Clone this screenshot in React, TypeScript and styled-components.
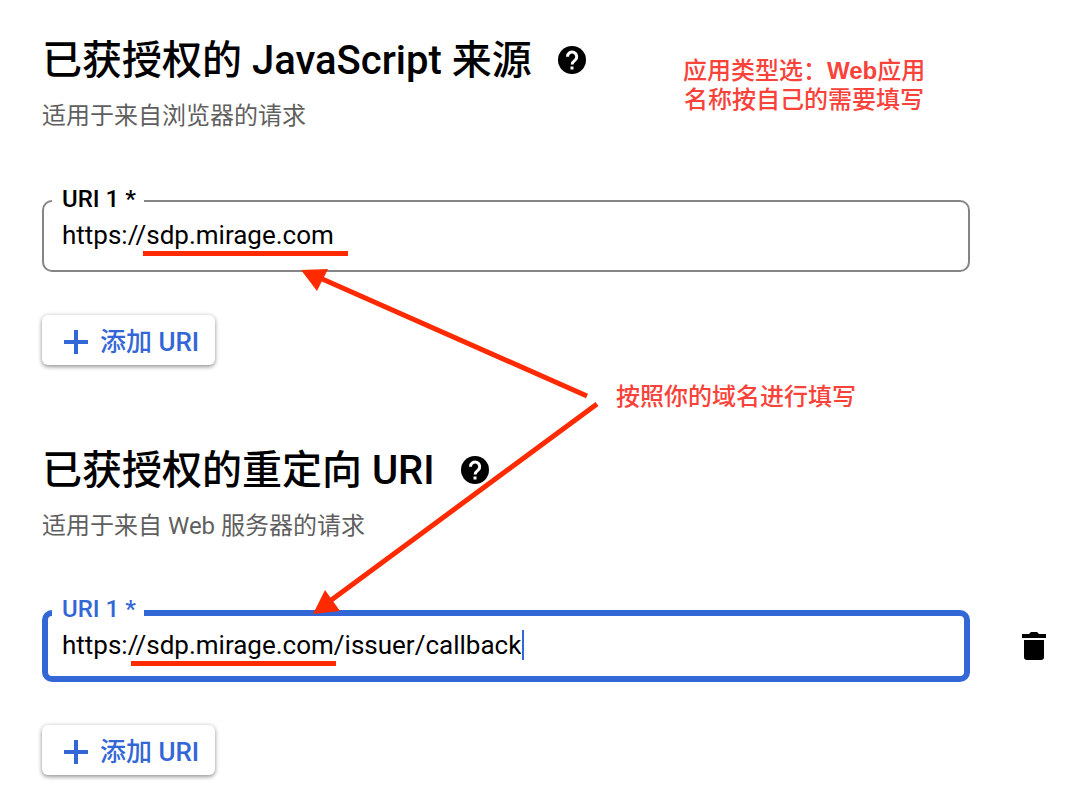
import React from "react";
import styled, { createGlobalStyle } from "styled-components";

const BLUE = "#3367d6";
const RED = "#ff2a00";

const GlobalStyle = createGlobalStyle`
  *, *::before, *::after { box-sizing: border-box; }
  body {
    margin: 0;
    background: #fff;
    color: #000;
    font-family: Roboto, "Noto Sans CJK SC", sans-serif;
  }
`;

const Page = styled.main`
  position: relative;
  display: flex;
  flex-direction: column;
  gap: 81px;
  padding: 36px 34px 16px 42px;
`;

const Section = styled.section`
  display: flex;
  flex-direction: column;
  align-items: stretch;
`;

const TitleRow = styled.div`
  display: flex;
  align-items: center;
  gap: 26px;
  height: 48px;
`;

const Title = styled.h2`
  margin: 0;
  padding-top: 2px;
  font-size: 40px;
  line-height: 48px;
  font-weight: 500;
`;

const Hint = styled.p`
  margin: 16px 0 68px;
  font-size: 24px;
  line-height: 32px;
  font-weight: 400;
  color: #5f5f5f;
`;

const IconButton = styled.button`
  display: flex;
  padding: 0;
  border: 0;
  background: none;
  color: #000;
  cursor: pointer;
`;

const FieldRow = styled.div`
  display: grid;
  grid-template-columns: minmax(0, 1fr) 24px;
  align-items: center;
  gap: 52px;
`;

const Field = styled.div<{ $active: boolean }>`
  position: relative;
  display: flex;
  align-items: center;
  height: 72px;
  padding: 0 20px 2px;
  border-radius: 10px;
  box-shadow: inset 0 0 0 ${(p) => (p.$active ? `6px ${BLUE}` : "2px #858585")};
`;

const Label = styled.label<{ $active: boolean }>`
  position: absolute;
  top: -14px;
  left: 10px;
  padding: 0 8px 0 10px;
  background: #fff;
  font-size: 24px;
  line-height: 26px;
  font-weight: 500;
  color: ${(p) => (p.$active ? BLUE : "#000")};
`;

const Input = styled.input`
  field-sizing: content;
  min-width: 0;
  max-width: 100%;
  padding: 0;
  border: 0;
  outline: 0;
  background: transparent;
  font: 400 26px/32px Roboto, "Noto Sans CJK SC", sans-serif;
  color: #000;
`;

const Caret = styled.span`
  width: 2px;
  height: 30px;
  margin-left: 1px;
  background: ${BLUE};
`;

const AddButton = styled.button`
  display: flex;
  align-items: center;
  align-self: flex-start;
  gap: 12px;
  height: 50px;
  margin-top: 43px;
  padding: 4px 16px 0 22px;
  border: 0;
  border-radius: 6px;
  background: #fff;
  box-shadow: 0 2px 4px rgba(0, 0, 0, 0.36), 0 0 5px rgba(0, 0, 0, 0.12);
  color: ${BLUE};
  font: 500 26px/32px Roboto, "Noto Sans CJK SC", sans-serif;
  cursor: pointer;
`;

const Marks = styled.svg`
  position: absolute;
  top: 0;
  left: 0;
  pointer-events: none;
`;

const Note = styled.p<{ $top: number; $left: number }>`
  position: absolute;
  top: ${(p) => p.$top}px;
  left: ${(p) => p.$left}px;
  margin: 0;
  font: 500 24px/29px "Liberation Sans", "Noto Sans CJK SC", sans-serif;
  text-align: center;
  white-space: nowrap;
  color: #f9423a;

  b { font-weight: 700; }
`;

const HelpIcon = () => (
  <svg width="28" height="28" viewBox="0 0 28 28" aria-hidden="true">
    <circle cx="14" cy="14" r="14" fill="currentColor" />
    <path
      d="M9.500 10.800a4.600 4.600 0 1 1 7.600 3.300c-1.700 1.400-3 2.100-3 4.400"
      fill="none"
      stroke="#fff"
      strokeWidth="3"
    />
    <path d="M12.500 20.500h3v3h-3z" fill="#fff" />
  </svg>
);

const PlusIcon = () => (
  <svg width="24" height="24" viewBox="0 0 24 24" fill="currentColor" aria-hidden="true">
    <path d="M10 0h4v10h10v4H14v10h-4V14H0v-4h10z" />
  </svg>
);

const TrashIcon = () => (
  <svg width="24" height="28" viewBox="0 0 24 28" fill="currentColor" aria-hidden="true">
    <path d="M2 8h20v17a3 3 0 0 1-3 3H5a3 3 0 0 1-3-3zM0 2h7l2-2h6l2 2h7v4H0z" />
  </svg>
);

interface UriSectionProps {
  id: string;
  title: string;
  hint: string;
  value: string;
  active?: boolean;
}

const UriSection = ({ id, title, hint, value, active = false }: UriSectionProps) => (
  <Section>
    <TitleRow>
      <Title>{title}</Title>
      <IconButton type="button" aria-label="帮助">
        <HelpIcon />
      </IconButton>
    </TitleRow>
    <Hint>{hint}</Hint>
    <FieldRow>
      <Field $active={active}>
        <Label htmlFor={id} $active={active}>URI 1 *</Label>
        <Input id={id} type="text" defaultValue={value} spellCheck={false} />
        {active && <Caret />}
      </Field>
      {active && (
        <IconButton type="button" aria-label="删除">
          <TrashIcon />
        </IconButton>
      )}
    </FieldRow>
    <AddButton type="button">
      <PlusIcon />
      添加 URI
    </AddButton>
  </Section>
);

export default function App() {
  return (
    <>
      <GlobalStyle />
      <Page>
        <UriSection
          id="origin-uri"
          title="已获授权的 JavaScript 来源"
          hint="适用于来自浏览器的请求"
          value="https://sdp.mirage.com"
        />
        <UriSection
          id="redirect-uri"
          title="已获授权的重定向 URI"
          hint="适用于来自 Web 服务器的请求"
          value="https://sdp.mirage.com/issuer/callback"
          active
        />
        <Marks width="620" height="680" viewBox="0 0 620 680" aria-hidden="true">
          <g stroke={RED} strokeWidth="5" fill="none">
            <path d="M143 253.500H348M131 663.500H336" />
            <path d="M587 396L320 278M597 404L330 601" />
          </g>
          <path d="M301 270L328 269L317 291zM313 614L325 590L340 611z" fill={RED} />
        </Marks>
        <Note $top={56} $left={683}>
          应用类型选：<b>Web</b>应用
          <br />
          名称按自己的需要填写
        </Note>
        <Note $top={382} $left={616}>按照你的域名进行填写</Note>
      </Page>
    </>
  );
}
